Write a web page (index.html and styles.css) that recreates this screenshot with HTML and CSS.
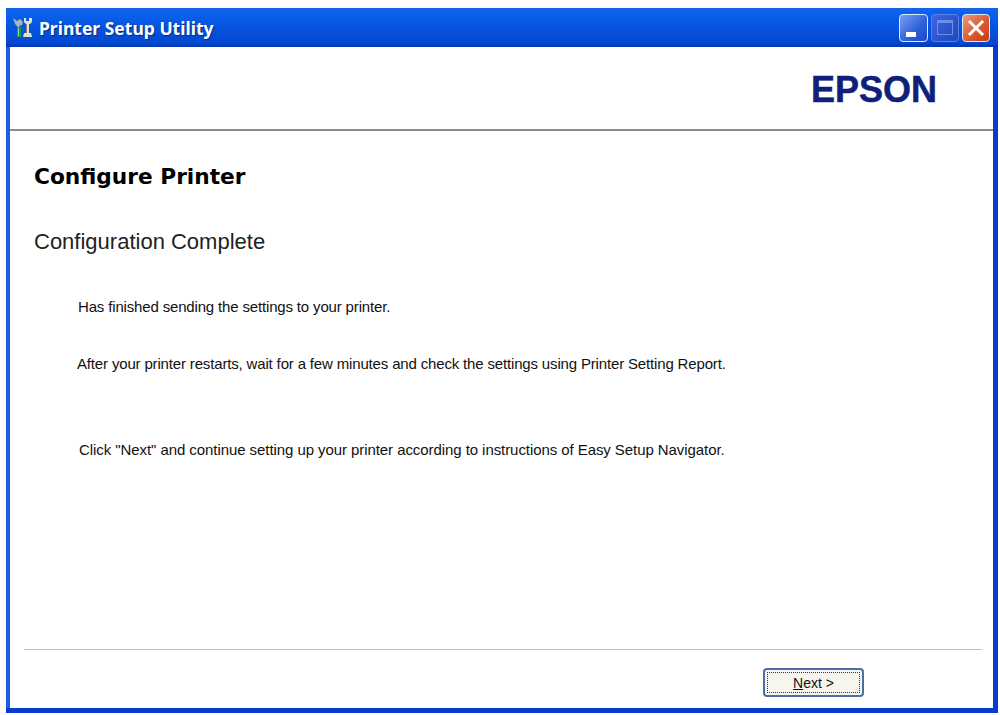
FILE: index.html
```html
<!DOCTYPE html>
<html lang="en">
<head>
    <meta charset="UTF-8">
    <title>Printer Setup Utility</title>
    <link rel="stylesheet" href="styles.css">
</head>
<body>
    <div class="window">
        <div class="titlebar">
            <svg class="app-icon" width="22" height="22" viewBox="0 0 22 22">
                <path d="M1 1l4 3 3-2 3 3-1 3-3 1v2H5V9L3 7z" fill="#a9b4b8"/>
                <rect x="5" y="10" width="4" height="10" fill="#1f9a3c"/>
                <rect x="6" y="11" width="1" height="8" fill="#7fd68c"/>
                <path d="M12 1h2v3h3V1h3v4l-2 2h-1v9h2l1 4h-9l1-4h3V7h-1l-2-2z" fill="#e4e0cc"/>
                <rect x="14" y="7" width="1" height="9" fill="#8b8a70"/>
            </svg>
            <span class="title">Printer Setup Utility</span>
            <div class="win-buttons">
                <div class="win-btn btn-min"><span class="min-bar"></span></div>
                <div class="win-btn btn-max"><span class="max-box"></span></div>
                <div class="win-btn btn-close">
                    <svg width="18" height="18" viewBox="0 0 18 18">
                        <path d="M3 3l12 12M15 3L3 15" stroke="#fff" stroke-width="3" stroke-linecap="square"/>
                    </svg>
                </div>
            </div>
        </div>
        <div class="client">
            <div class="header">
                <span class="logo">EPSON</span>
            </div>
            <div class="content">
                <h1>Configure Printer</h1>
                <h2>Configuration Complete</h2>
                <p class="msg-first">Has finished sending the settings to your printer.</p>
                <p class="msg-second">After your printer restarts, wait for a few minutes and check the settings using Printer Setting Report.</p>
                <p class="msg-third">Click "Next" and continue setting up your printer according to instructions of Easy Setup Navigator.</p>
            </div>
            <div class="footer">
                <button class="next"><span><u>N</u>ext &gt;</span></button>
            </div>
        </div>
    </div>
</body>
</html>
```

FILE: styles.css
```css
html, body {
    margin: 0;
    padding: 0;
    background: #fff;
}

body {
    padding: 8px 2px 2px 6px;
    font-family: "Liberation Sans", Arial, sans-serif;
    color: #111;
}

.window {
    height: 705px;
    display: flex;
    flex-direction: column;
    background: #0a3ccc;
    border-radius: 5px 5px 0 0;
}

.titlebar {
    height: 39px;
    display: flex;
    align-items: center;
    padding: 0 8px 0 6px;
    background: linear-gradient(#1a62e4 0%, #0a62ee 10%, #0554e0 50%, #0348d0 90%, #0436b0 100%);
}

.app-icon {
    margin-right: 5px;
}

.title {
    font-family: "Noto Sans", sans-serif;
    font-weight: bold;
    font-size: 17.5px;
    color: #fff;
    text-shadow: 1px 1px 1px #0a2a80;
}

.win-buttons {
    margin-left: auto;
    display: flex;
    gap: 3px;
}

.win-btn {
    width: 28px;
    height: 28px;
    box-sizing: border-box;
    border: 1px solid #dfe8fb;
    border-radius: 4px;
    display: flex;
    align-items: center;
    justify-content: center;
}

.btn-min {
    width: 29px;
    background: linear-gradient(135deg, #7c9ff0, #2d5fdc 60%, #1f48c4);
    align-items: flex-end;
    justify-content: flex-start;
    padding: 0 0 4px 6px;
}

.min-bar {
    width: 10px;
    height: 5px;
    background: #fff;
}

.btn-max {
    background: linear-gradient(135deg, #3f68de, #2a52cc 60%, #2348c0);
    border-color: #5a80e6;
}

.max-box {
    width: 16px;
    height: 15px;
    box-sizing: border-box;
    border: 1px solid #6d8fe8;
    border-top: 3px solid #6d8fe8;
}

.btn-close {
    background: linear-gradient(135deg, #ea9a7c, #dc5a30 55%, #c43c14);
}

.client {
    flex: 1;
    margin: 0 5px 5px 0;
    border-left: 4px solid #1a5ce0;
    background: #fff;
    display: flex;
    flex-direction: column;
}

.header {
    height: 84px;
    box-sizing: border-box;
    border-bottom: 2px solid #8c8c8c;
    display: flex;
    align-items: center;
    justify-content: flex-end;
    padding: 3px 56px 0 0;
}

.logo {
    font-weight: bold;
    font-size: 36px;
    color: #101f7a;
    -webkit-text-stroke: 0.5px #101f7a;
}

.content {
    flex: 1;
    padding-left: 24px;
}

h1 {
    margin: 33px 0 0;
    font-family: "DejaVu Sans", sans-serif;
    font-size: 21.7px;
    line-height: 26px;
    color: #000;
}

h2 {
    margin: 39px 0 0;
    font-weight: normal;
    font-size: 22px;
    line-height: 26px;
    color: #222;
}

p {
    margin: 0;
    font-size: 15px;
    line-height: 16px;
    letter-spacing: -0.16px;
}

.msg-first {
    margin: 44px 0 0 44px;
}

.msg-second {
    margin: 41px 0 0 43px;
}

.msg-third {
    margin: 70px 0 0 45px;
    letter-spacing: -0.07px;
}

.footer {
    height: 59px;
    margin: 0 11px 0 14px;
    border-top: 1px solid #c4c2b8;
    display: flex;
    justify-content: flex-end;
    padding: 18px 118px 0 0;
    box-sizing: border-box;
}

.next {
    width: 101px;
    height: 29px;
    padding: 2px;
    border: 2px solid #4a6fa8;
    border-radius: 4px;
    background: #f6f5ee;
    font-family: "Liberation Sans", Arial, sans-serif;
    font-size: 14px;
    color: #111;
}

.next span {
    display: flex;
    align-items: center;
    justify-content: center;
    height: 100%;
    border: 1px dotted #333;
    box-sizing: border-box;
}
```
